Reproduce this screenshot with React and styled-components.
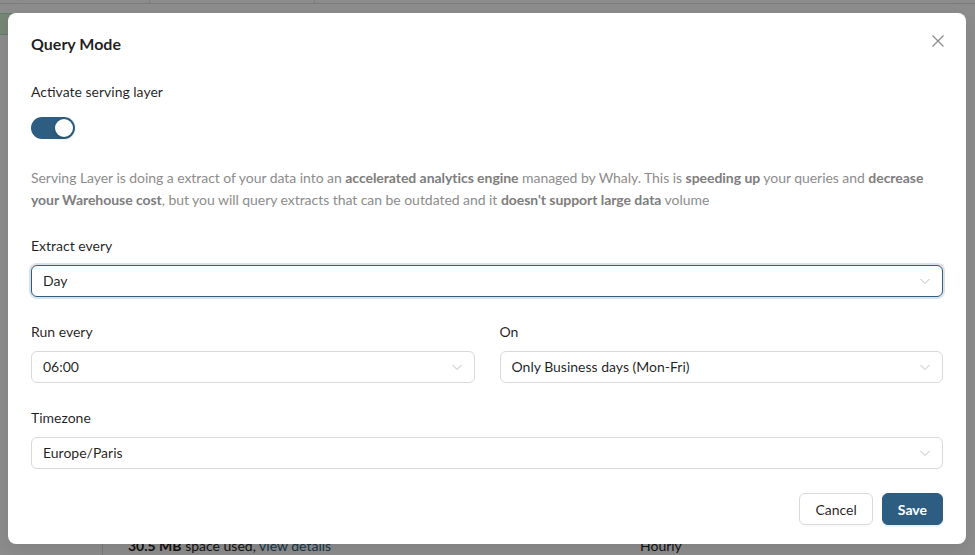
import React, { useState } from 'react'
import styled, { createGlobalStyle } from 'styled-components'

const GlobalStyle = createGlobalStyle`
  html, body {
    margin: 0;
    padding: 0;
    width: 975px;
    height: 555px;
    overflow: hidden;
    font-family: Lato, "Noto Sans", sans-serif;
    font-size: 14px;
  }
  * { box-sizing: border-box; }
`

const Page = styled.div`
  position: relative;
  width: 975px;
  height: 555px;
  background: #ffffff;
  display: flex;
  flex-direction: column;
`

const TopBar = styled.div`
  height: 4px;
  border-bottom: 1px solid #e0e0e0;
  display: flex;
`

const TopCell = styled.div`
  width: ${p => p.w}px;
  border-right: 1px solid #e0e0e0;
`

const PageBody = styled.div`
  flex: 1;
  display: flex;
  flex-direction: column;
  justify-content: space-between;
`

const Tag = styled.div`
  margin-top: 9px;
  width: 32px;
  height: 22px;
  background: #d5f5d6;
  border: 1px solid #b7e3b8;
  border-left: none;
  border-radius: 0 4px 4px 0;
  color: #222;
  font-size: 14px;
  line-height: 20px;
  text-align: right;
  overflow: hidden;
  padding-right: 2px;
`

const FooterRow = styled.div`
  height: 25px;
  display: flex;
  align-items: flex-end;
`

const FooterGutter = styled.div`
  flex-shrink: 0;
  width: 103px;
  height: 25px;
  border-right: 1px solid #e0e0e0;
`

const FooterText = styled.div`
  flex-shrink: 0;
  width: ${p => p.w}px;
  padding-left: ${p => p.pad || 0}px;
  color: #1f1f1f;
  line-height: 18px;
  white-space: nowrap;
  b { font-weight: 700; }
  a { color: #2d5e82; text-decoration: none; }
`

const Overlay = styled.div`
  position: absolute;
  inset: 0;
  background: rgba(0, 0, 0, 0.45);
`

const Modal = styled.div`
  position: absolute;
  left: 8px;
  top: 13px;
  width: 958px;
  height: 531px;
  background: #ffffff;
  border-radius: 8px;
  padding: 20px 23px 19px;
  display: flex;
  flex-direction: column;
  box-shadow: 0 6px 16px rgba(0, 0, 0, 0.08);
`

const Title = styled.div`
  font-size: 16px;
  font-weight: 700;
  line-height: 22px;
  color: rgba(0, 0, 0, 0.88);
`

const Close = styled.button`
  position: absolute;
  top: 17px;
  right: 17px;
  width: 22px;
  height: 22px;
  border: none;
  background: transparent;
  padding: 0;
  display: flex;
  align-items: center;
  justify-content: center;
  color: rgba(0, 0, 0, 0.45);
  cursor: pointer;
`

const Body = styled.div`
  display: flex;
  flex-direction: column;
  margin-top: 26px;
`

const Label = styled.div`
  line-height: 22px;
  color: rgba(0, 0, 0, 0.88);
  margin-bottom: ${p => p.gap || 8}px;
`

const Switch = styled.button`
  width: 44px;
  height: 22px;
  border-radius: 11px;
  border: none;
  padding: 0;
  background: ${p => (p.on ? '#2d5e82' : '#bfbfbf')};
  position: relative;
  cursor: pointer;
  &::after {
    content: '';
    position: absolute;
    top: 2px;
    left: ${p => (p.on ? '24px' : '2px')};
    width: 18px;
    height: 18px;
    border-radius: 50%;
    background: #fff;
    box-shadow: 0 2px 4px rgba(0, 35, 11, 0.2);
  }
`

const Description = styled.p`
  margin: 25px 0 24px;
  line-height: 22px;
  color: #8c8c8c;
  letter-spacing: -0.05px;
  b { font-weight: 700; color: #7d7d7d; }
`

const Field = styled.div`
  display: flex;
  flex-direction: column;
  flex: 1;
  min-width: 0;
`

const Row = styled.div`
  display: flex;
  gap: 25px;
  margin-top: ${p => p.mt || 0}px;
`

const SelectBox = styled.div`
  height: 32px;
  border: 1px solid ${p => (p.focused ? '#2d5e82' : '#d9d9d9')};
  border-radius: 6px;
  box-shadow: ${p => (p.focused ? '0 0 0 2px rgba(45, 94, 130, 0.18)' : 'none')};
  display: flex;
  align-items: center;
  justify-content: space-between;
  padding: 0 11px;
  color: rgba(0, 0, 0, 0.88);
  line-height: 22px;
  background: #fff;
`

const Chevron = () => (
  <svg width="12" height="12" viewBox="0 0 12 12" fill="none">
    <path d="M1.5 4l4.5 4.5L10.5 4" stroke="#bfbfbf" strokeWidth="1" />
  </svg>
)

const Select = ({ value, focused }) => (
  <SelectBox focused={focused}>
    <span>{value}</span>
    <Chevron />
  </SelectBox>
)

const Footer = styled.div`
  margin-top: auto;
  display: flex;
  justify-content: flex-end;
  gap: 9px;
`

const Button = styled.button`
  height: 32px;
  padding: 0 15px;
  border-radius: 6px;
  font-family: inherit;
  font-size: 14px;
  cursor: pointer;
  border: 1px solid ${p => (p.primary ? '#2d5e82' : '#d9d9d9')};
  background: ${p => (p.primary ? '#2d5e82' : '#fff')};
  color: ${p => (p.primary ? '#fff' : 'rgba(0, 0, 0, 0.88)')};
  font-weight: ${p => (p.primary ? 700 : 400)};
  box-shadow: ${p => (p.primary ? '0 2px 0 rgba(5, 145, 255, 0.1)' : '0 2px 0 rgba(0, 0, 0, 0.02)')};
`

export default function App() {
  const [on, setOn] = useState(true)

  return (
    <>
      <GlobalStyle />
      <Page>
        <TopBar>
          <TopCell w={150} />
          <TopCell w={165} />
        </TopBar>
        <PageBody>
          <Tag>nt</Tag>
          <FooterRow>
            <FooterGutter />
            <FooterText w={537} pad={25}>
              <b>30.5 MB</b> space used, <a href="#">view details</a>
            </FooterText>
            <FooterText w={200}>Hourly</FooterText>
          </FooterRow>
        </PageBody>
        <Overlay />
        <Modal>
          <Title>Query Mode</Title>
          <Close aria-label="Close">
            <svg width="14" height="14" viewBox="0 0 14 14" fill="none">
              <path d="M1.5 1.5l11 11M12.5 1.5l-11 11" stroke="currentColor" strokeWidth="1.3" />
            </svg>
          </Close>
          <Body>
            <Label gap={14}>Activate serving layer</Label>
            <div>
              <Switch on={on} onClick={() => setOn(!on)} />
            </div>
            <Description>
              Serving Layer is doing a extract of your data into an <b>accelerated analytics engine</b> managed
              by Whaly. This is <b>speeding up</b> your queries and <b>decrease your Warehouse cost</b>, but you
              will query extracts that can be outdated and it <b>doesn't support large data</b> volume
            </Description>
            <Field>
              <Label>Extract every</Label>
              <Select value="Day" focused />
            </Field>
            <Row mt={24}>
              <Field>
                <Label>Run every</Label>
                <Select value="06:00" />
              </Field>
              <Field>
                <Label>On</Label>
                <Select value="Only Business days (Mon-Fri)" />
              </Field>
            </Row>
            <Row mt={24}>
              <Field>
                <Label>Timezone</Label>
                <Select value="Europe/Paris" />
              </Field>
            </Row>
          </Body>
          <Footer>
            <Button>Cancel</Button>
            <Button primary>Save</Button>
          </Footer>
        </Modal>
      </Page>
    </>
  )
}
